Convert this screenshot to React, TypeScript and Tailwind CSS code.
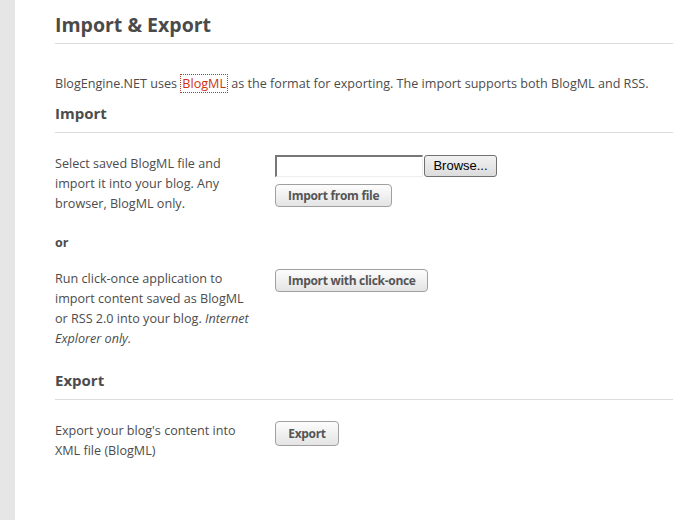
import React from 'react';

const btn =
  "h-[23px] px-3 whitespace-nowrap rounded-[4px] border border-[#a0a0a0] bg-gradient-to-b from-[#fdfdfd] to-[#e4e4e4] text-[12px] font-bold text-[#555] leading-none tracking-[-0.3px]";

export default function App() {
  return (
    <div className="flex min-h-[520px] bg-white text-[#4c4c4c] font-['Open_Sans',sans-serif]">
      <div className="w-[15px] shrink-0 bg-[#e6e6e6]" />
      <div className="flex-1 pl-[40px] pt-[12px]">
        <h1 className="text-[19.5px] font-bold text-[#4a4a4a] leading-[26px] pb-[5px] border-b border-[#dcdcdc]">
          Import &amp; Export
        </h1>

        <p className="mt-[30px] text-[12.6px] leading-[20px]">
          BlogEngine.NET uses{' '}
          <a className="text-[#d03010] border border-dotted border-[#b04020] px-[1px]">BlogML</a>{' '}
          as the format for exporting. The import supports both BlogML and RSS.
        </p>

        <h2 className="mt-[8px] text-[15px] font-bold leading-[22px] pb-[8px] border-b border-[#dcdcdc]">Import</h2>

        <div className="mt-[21px] flex text-[12.6px] leading-[20px]">
          <p className="w-[200px] mr-[20px]">
            Select saved BlogML file and import it into your blog. Any browser, BlogML only.
          </p>
          <div className="flex flex-col items-start gap-[7px] pt-[1px]">
            <div className="flex">
              <div className="w-[148px] h-[22px] border-t-2 border-l-2 border-[#777] border-b border-r border-b-[#eee] border-r-[#eee] bg-white" />
              <button className="ml-[1px] h-[22px] w-[73px] rounded-[3px] border border-[#707070] bg-gradient-to-b from-[#f2f2f2] to-[#dcdcdc] text-[13px] text-black font-['Liberation_Sans',sans-serif]">
                Browse...
              </button>
            </div>
            <button className={btn + " w-[117px]"}>Import from file</button>
          </div>
        </div>

        <p className="mt-[19px] text-[12.6px] font-bold leading-[20px]">or</p>

        <div className="mt-[16px] flex text-[12.6px] leading-[20px]">
          <p className="w-[200px] mr-[20px]">
            Run click-once application to import content saved as BlogML or RSS 2.0 into your blog.{' '}
            <em>Internet Explorer only.</em>
          </p>
          <div>
            <button className={btn + " w-[153px]"}>Import with click-once</button>
          </div>
        </div>

        <h2 className="mt-[20px] text-[15px] font-bold leading-[22px] pb-[8px] border-b border-[#dcdcdc]">Export</h2>

        <div className="mt-[21px] flex text-[12.6px] leading-[20px]">
          <p className="w-[200px] mr-[20px]">Export your blog's content into XML file (BlogML)</p>
          <div>
            <button className={btn + " w-[64px] h-[25px]"}>Export</button>
          </div>
        </div>
      </div>
    </div>
  );
}
